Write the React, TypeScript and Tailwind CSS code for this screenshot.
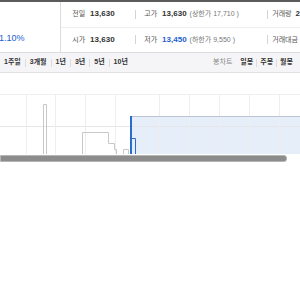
import React from "react";

const font = "font-['Liberation_Sans','Noto_Sans_CJK_KR',sans-serif]";

function Sep() {
  return <span className="w-px h-[9px] bg-[#d4d4d4] shrink-0" />;
}

function Tab({ children, sep = true, tight = false }: { children: React.ReactNode; sep?: boolean; tight?: boolean }) {
  return (
    <>
      <span className="font-bold text-[#333]">{children}</span>
      {sep && <span className={`w-px h-[8px] bg-[#dcdcdc] ${tight ? "mx-[3px]" : "mx-[4px]"}`} />}
    </>
  );
}

export default function App() {
  const vlines = [26, 55, 85, 115, 159, 189, 219, 249, 279];
  return (
    <div className={`w-[300px] h-[300px] bg-white overflow-hidden ${font}`}>
      <div className="h-[2px] bg-[#5b5b5b]" />
      <div className="flex h-[51px] border-b border-[#dcdcdc]">
        <div className="w-[64px] border-r border-[#dcdcdc] flex items-end pb-[9px]">
          <span className="text-[9px] text-[#1b61d1] leading-none ml-[-1px]">1.10%</span>
        </div>
        <div className="flex-1 flex flex-col text-[#333]">
          <div className="flex-1 flex items-center border-b border-[#efefef]">
            <div className="w-[74px] pl-[11px] flex items-center">
              <span className="text-[7px] text-[#555]">전일</span>
              <span className="ml-[5px] text-[8px] font-bold">13,630</span>
            </div>
            <Sep />
            <div className="w-[131px] pl-[8px] flex items-center">
              <span className="text-[7px] text-[#555]">고가</span>
              <span className="ml-[5px] text-[8px] font-bold">13,630</span>
              <span className="ml-[3px] text-[7px] text-[#777]">(상한가 17,710 )</span>
            </div>
            <Sep />
            <div className="pl-[4px] flex items-center whitespace-nowrap">
              <span className="text-[7px] text-[#555]">거래량</span>
              <span className="ml-[4px] text-[8px] font-bold">2</span>
            </div>
          </div>
          <div className="flex-1 flex items-center">
            <div className="w-[74px] pl-[11px] flex items-center">
              <span className="text-[7px] text-[#555]">시가</span>
              <span className="ml-[5px] text-[8px] font-bold">13,630</span>
            </div>
            <Sep />
            <div className="w-[131px] pl-[8px] flex items-center">
              <span className="text-[7px] text-[#555]">저가</span>
              <span className="ml-[5px] text-[8px] font-bold text-[#1b61d1]">13,450</span>
              <span className="ml-[3px] text-[7px] text-[#777]">(하한가 9,550 )</span>
            </div>
            <Sep />
            <div className="pl-[4px] flex items-center whitespace-nowrap">
              <span className="text-[7px] text-[#555]">거래대금</span>
            </div>
          </div>
        </div>
      </div>
      <div className="h-[20px] bg-[#f5f5f7] border-b border-[#e2e2e2] flex items-center justify-between text-[7px] px-[4px]">
        <div className="flex items-center">
          <Tab>1주일</Tab>
          <Tab>3개월</Tab>
          <Tab>1년</Tab>
          <Tab>3년</Tab>
          <Tab>5년</Tab>
          <Tab sep={false}>10년</Tab>
        </div>
        <div className="flex items-center pr-[3px]">
          <span className="text-[#8a8a8a] mr-[8px]">봉차트</span>
          <Tab tight>일봉</Tab>
          <Tab tight>주봉</Tab>
          <Tab sep={false}>월봉</Tab>
        </div>
      </div>
      <svg width="300" height="82" viewBox="0 0 300 82" className="block">
        <rect x="130" y="43" width="170" height="38" fill="#e6eefa" />
        <line x1="0" y1="21.5" x2="300" y2="21.5" stroke="#efefef" />
        <line x1="0" y1="53.5" x2="300" y2="53.5" stroke="#e6e6e6" />
        {vlines.map((x) => (
          <line key={x} x1={x + 0.5} y1="21" x2={x + 0.5} y2="81" stroke="#eeeeee" />
        ))}
        <line x1="130" y1="43.5" x2="300" y2="43.5" stroke="#b9c3d3" />
        <path d="M43.5 81 V31.5 H46.5 V81" fill="none" stroke="#c8c8c8" />
        <path d="M82.5 81 V59.5 H108.5 V70.5 H114.5 V76.5 H116.5 V81" fill="none" stroke="#c8c8c8" />
        <path d="M123.5 81 V76.5 H128.5 V81" fill="none" stroke="#c8c8c8" />
        <line x1="131" y1="43" x2="131" y2="81" stroke="#2d6ccf" strokeWidth="2" />
        <path d="M132 65.5 H135.5 V81" fill="none" stroke="#2d6ccf" />
      </svg>
      <div className="h-[7px] w-[287px] bg-[#8c8c8c] border border-[#b5b5b5] rounded-r-[3px]" />
    </div>
  );
}
